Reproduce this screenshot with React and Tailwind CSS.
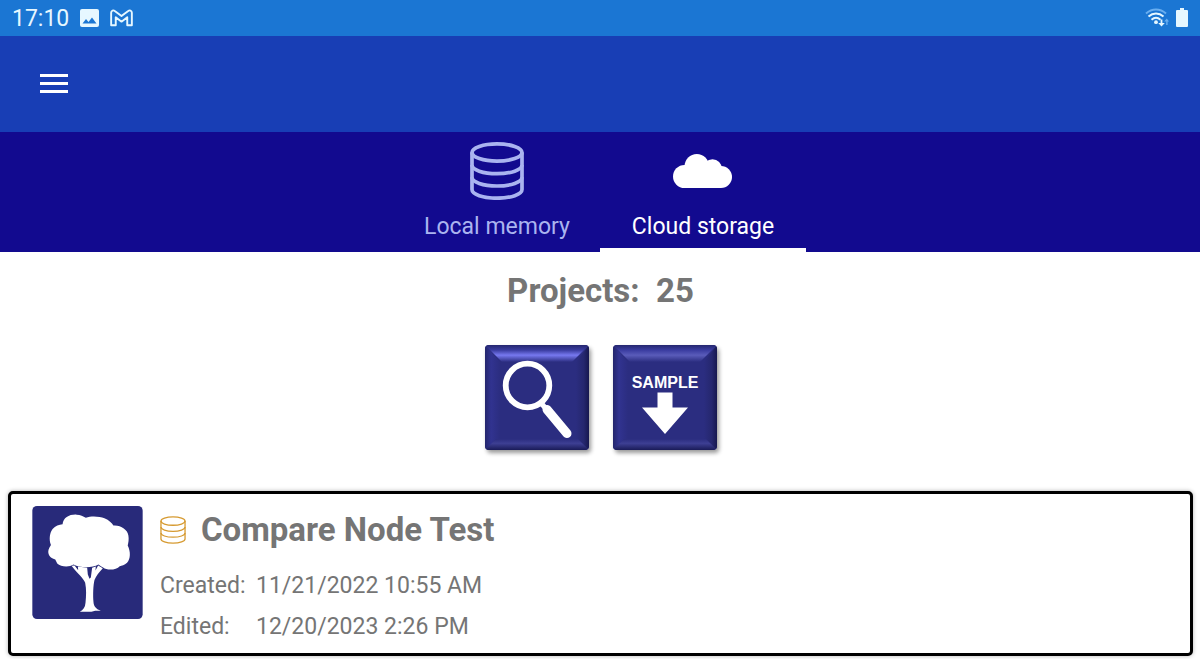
import { useState } from "react";
import { cva } from "class-variance-authority";

const projects = [
  {
    id: 1,
    name: "Compare Node Test",
    created: "11/21/2022 10:55 AM",
    edited: "12/20/2023 2:26 PM",
  },
];

const tabStyles = cva(
  "w-[206px] h-[120px] flex flex-col items-center justify-between pt-2 border-b-4 text-[23px] leading-8",
  {
    variants: {
      active: {
        true: "border-white text-white",
        false: "border-transparent text-[#aab4f0]",
      },
    },
  },
);

function DatabaseIcon({ className, strokeWidth }) {
  return (
    <svg
      viewBox="0 0 54 58"
      className={className}
      fill="none"
      stroke="currentColor"
      strokeWidth={strokeWidth}
      aria-hidden="true"
    >
      <ellipse cx="27" cy="10.5" rx="25" ry="8.6" />
      <path d="M2 10.5V47.5C2 52.3 13 56.2 27 56.2S52 52.3 52 47.5V10.5" />
      <path d="M2 23C2 27.8 13 31.7 27 31.7S52 27.8 52 23" />
      <path d="M2 35.3C2 40.1 13 44 27 44S52 40.1 52 35.3" />
    </svg>
  );
}

function CloudIcon() {
  return (
    <svg viewBox="0 0 60 34" className="w-[60px] h-[34px]" fill="currentColor" aria-hidden="true">
      <circle cx="11.5" cy="22.5" r="11.5" />
      <circle cx="23.8" cy="12.2" r="12.2" />
      <circle cx="39.5" cy="14.7" r="9.4" />
      <circle cx="48" cy="23" r="11" />
      <path d="M11.5 20L20 14H40L48 20V34H11.5Z" />
    </svg>
  );
}

function StatusBar() {
  return (
    <div className="h-9 bg-[#1b76d3] text-[#e6f7ff] flex items-center justify-between px-3">
      <div className="flex items-center gap-[11px]">
        <span className="text-[23px] leading-9 pt-[2px]">17:10</span>
        <svg viewBox="0 0 19 18" className="w-[19px] h-[18px]" aria-hidden="true">
          <rect width="19" height="18" rx="2" fill="currentColor" />
          <path d="M2.5 14.5L6 10L8.5 13L12 8.5L16.5 14.5Z" fill="#1b76d3" />
        </svg>
        <svg
          viewBox="0 0 24 18"
          className="w-[23px] h-[18px]"
          fill="none"
          stroke="currentColor"
          strokeWidth="2"
          strokeLinejoin="round"
          aria-hidden="true"
        >
          <path d="M1.2 3.5C1.2 1 3.6.5 5 1.7L12 7L19 1.7C20.4.5 22.8 1 22.8 3.5V16.5H18V8.3L12 12.8L6 8.3V16.5H1.2Z" />
        </svg>
      </div>
      <div className="flex items-center gap-[7px] pb-[2px]">
        <svg viewBox="0 0 24 19" className="w-6 h-[19px]" fill="none" aria-hidden="true">
          <path d="M1 5.5C7 .2 15 .2 21 5.5" stroke="#69aef0" strokeWidth="2" />
          <path d="M3.5 8.5C8 4.6 14 4.6 18.500 8.5" stroke="currentColor" strokeWidth="2" />
          <path d="M6.5 11.700C9.5 9.2 12.5 9.2 15.500 11.700" stroke="currentColor" strokeWidth="2" />
          <circle cx="11" cy="14.2" r="1.9" fill="currentColor" />
          <path d="M15.600 11.5V15H13.200L16.500 18.5L19.800 15H17.400V11.5Z" fill="currentColor" />
          <path d="M21.200 17V13.500H19.200L21.800 10.500L24 13.500H22.600V17Z" fill="#69aef0" />
        </svg>
        <svg viewBox="0 0 12 19" className="w-3 h-[19px]" fill="currentColor" aria-hidden="true">
          <path d="M4 0H8V2H11Q12 2 12 3V18Q12 19 11 19H1Q0 19 0 18V3Q0 2 1 2H4Z" />
        </svg>
      </div>
    </div>
  );
}

function BevelFrame({ id, shine }) {
  return (
    <>
      <defs>
        <linearGradient id={`${id}-top`} x1="0" y1="0" x2="0" y2="1">
          <stop offset="0" stopColor="#25276f" />
          <stop offset="0.3" stopColor="#3a3ca0" />
          <stop offset="0.6" stopColor={shine} />
          <stop offset="1" stopColor="#2b2d80" />
        </linearGradient>
        <linearGradient id={`${id}-bottom`} x1="0" y1="0" x2="0" y2="1">
          <stop offset="0" stopColor="#2b2d80" />
          <stop offset="0.4" stopColor="#3d3f93" />
          <stop offset="1" stopColor="#1a1b58" />
        </linearGradient>
        <linearGradient id={`${id}-left`} x1="0" y1="0" x2="1" y2="0">
          <stop offset="0" stopColor="#23256c" />
          <stop offset="0.4" stopColor="#313390" />
          <stop offset="1" stopColor="#2b2d80" />
        </linearGradient>
        <linearGradient id={`${id}-right`} x1="0" y1="0" x2="1" y2="0">
          <stop offset="0" stopColor="#2b2d80" />
          <stop offset="0.6" stopColor="#25276e" />
          <stop offset="1" stopColor="#17184f" />
        </linearGradient>
        <clipPath id={`${id}-clip`}>
          <rect width="104" height="105" rx="4" />
        </clipPath>
      </defs>
      <g clipPath={`url(#${id}-clip)`}>
        <rect width="104" height="105" fill="#2b2d80" />
        <path d="M0 0L15 17V94L0 105Z" fill={`url(#${id}-left)`} />
        <path d="M104 0L91 17V94L104 105Z" fill={`url(#${id}-right)`} />
        <path d="M0 0H104L87 17H17Z" fill={`url(#${id}-top)`} />
        <path d="M0 105L11 94H93L104 105Z" fill={`url(#${id}-bottom)`} />
      </g>
    </>
  );
}

function BevelButton({ id, label, shine, children }) {
  return (
    <button
      type="button"
      aria-label={label}
      className="rounded-sm shadow-[2px_3px_4px_rgba(0,0,0,0.4)] cursor-pointer"
    >
      <svg viewBox="0 0 104 105" className="block w-[104px] h-[105px]" aria-hidden="true">
        <BevelFrame id={id} shine={shine} />
        {children}
      </svg>
    </button>
  );
}

function TreeThumbnail() {
  return (
    <svg viewBox="37 17 332 340" className="w-[111px] h-[113px] shrink-0" aria-hidden="true">
      <rect x="37" y="17" width="332" height="340" rx="14" fill="#282a7a" />
      <path
        fill="#fff"
        d="M128 72C130 52 148 42 170 43C182 43 190 48 198 52C215 46 240 48 254 54C268 60 276 68 281 76C302 74 324 88 326 106C328 118 326 128 324 136C333 154 333 176 322 188C314 196 306 196 300 198C290 210 262 212 250 202C244 199 240 196 236 193C218 204 180 204 161 193C148 202 122 200 112 190C110 186 108 182 106 178C90 174 82 162 86 148C88 142 91 138 93 134C86 116 90 96 98 86C106 77 118 73 128 72Z"
      />
      <path
        fill="#fff"
        d="M155 197L164 196L175 210L174 199L202 203L204 223L209 236L213 232L217 203L228 199L227 211L235 196L249 204C238 216 229 226 224 240C220 256 219 286 221 306C222 320 230 328 243 332L226 332L215 335L180 335C190 330 196 322 197 308C199 288 200 268 196 248C191 234 172 220 155 197Z"
      />
    </svg>
  );
}

function ProjectCard({ project }) {
  return (
    <article className="flex gap-[17px] border-[3px] border-black rounded-[5px] pt-3 pb-[6px] px-[21px] bg-white shadow-[0_0_4px_rgba(0,0,0,0.3)]">
      <TreeThumbnail />
      <div className="text-[#757575]">
        <div className="flex items-center gap-[15px]">
          <DatabaseIcon className="w-[26px] h-7 text-[#d69a30]" strokeWidth={2.7} />
          <h2 className="text-[33px] leading-[48px] font-bold">{project.name}</h2>
        </div>
        <dl className="mt-[11px] grid grid-cols-[96px_auto] text-[23px] leading-[41px]">
          <dt>Created:</dt>
          <dd>{project.created}</dd>
          <dt>Edited:</dt>
          <dd>{project.edited}</dd>
        </dl>
      </div>
    </article>
  );
}

export default function App() {
  const [tab, setTab] = useState("cloud");

  return (
    <div className="min-h-screen bg-white font-[Roboto,sans-serif]">
      <StatusBar />

      <header className="h-24 bg-[#183eb5] flex items-center px-10 pb-[2px]">
        <button type="button" aria-label="Open menu" className="flex flex-col gap-[5px] cursor-pointer">
          <span className="w-7 h-[3px] bg-white" />
          <span className="w-7 h-[3px] bg-white" />
          <span className="w-7 h-[3px] bg-white" />
        </button>
      </header>

      <nav role="tablist" className="bg-[#120a8f] flex justify-center">
        <button
          type="button"
          role="tab"
          aria-selected={tab === "local"}
          onClick={() => setTab("local")}
          className={tabStyles({ active: tab === "local" })}
        >
          <span className="h-[62px] flex items-center">
            <DatabaseIcon className="w-[54px] h-[58px]" strokeWidth={3.7} />
          </span>
          <span className="pb-[5px]">Local memory</span>
        </button>
        <button
          type="button"
          role="tab"
          aria-selected={tab === "cloud"}
          onClick={() => setTab("cloud")}
          className={tabStyles({ active: tab === "cloud" })}
        >
          <span className="h-[62px] flex items-center">
            <CloudIcon />
          </span>
          <span className="pb-[5px]">Cloud storage</span>
        </button>
      </nav>

      <main className="pl-2 pr-[7px] pt-5">
        <h1 className="text-center text-[33px] leading-[38px] font-bold text-[#757575] whitespace-pre">
          {"Projects:  25"}
        </h1>

        <div className="mt-[35px] mb-[41px] flex justify-center gap-6">
          <BevelButton id="search" label="Search projects" shine="#7779f0">
            <circle cx="42.5" cy="40.5" r="21.8" fill="none" stroke="#fff" strokeWidth="5.8" />
            <path d="M56 58L63 66" stroke="#fff" strokeWidth="5" />
            <path d="M62 64.5L82 88.5" stroke="#fff" strokeWidth="9" strokeLinecap="round" />
          </BevelButton>
          <BevelButton id="sample" label="Download sample" shine="#5a5cba">
            <text
              x="52"
              y="43"
              textAnchor="middle"
              fill="#fff"
              className="font-['Liberation_Sans',sans-serif] font-bold text-[16px]"
            >
              SAMPLE
            </text>
            <path d="M44.5 47.5H59.5V62.5H75L52 89L29 62.5H44.5Z" fill="#fff" />
          </BevelButton>
        </div>

        {projects.map((project) => (
          <ProjectCard key={project.id} project={project} />
        ))}
      </main>
    </div>
  );
}
